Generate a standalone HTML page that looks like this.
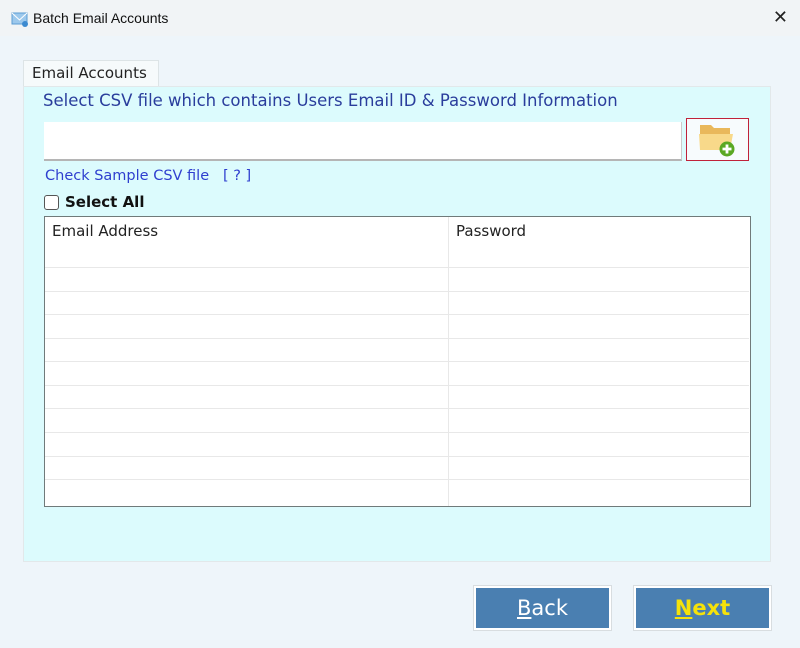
<!DOCTYPE html>
<html><head><style>
body{margin:0;width:800px;height:648px;overflow:hidden;background:#eef5fa;font-family:"DejaVu Sans","Liberation Sans",sans-serif;position:relative}
.tb{position:absolute;left:0;top:0;width:800px;height:36px;background:#f1f4f6;}
.tb span{position:absolute;left:33px;top:10px;font-family:"Liberation Sans",sans-serif;font-size:14px;color:#111}
.x{position:absolute;right:12px;top:7px;font-size:18px;color:#222;font-family:"Liberation Sans",sans-serif}
.tab{position:absolute;left:23px;top:60px;width:134px;height:27px;background:#f6fafb;border:1px solid #dde4e6;border-bottom:none;font-size:15px;color:#222}
.tab span{position:absolute;left:8px;top:3px}
.panel{position:absolute;left:23px;top:86px;width:746px;height:474px;background:#dcfbfd;border:1px solid #e2e8ea}
.t{position:absolute;font-size:15.5px;color:#2a3d9c}
.inp{position:absolute;left:44px;top:122px;width:637px;height:37px;background:#fff;border-bottom:2px solid #b5b5b5;border-right:1px solid #ccc}
.br{position:absolute;left:686px;top:118px;width:63px;height:43px;border:1px solid #c0223a;background:#f7fbfd;box-sizing:border-box}
.tbl{position:absolute;left:44px;top:216px;width:707px;height:291px;background:#fff;border:1px solid #707a7a;box-sizing:border-box}
.btn{position:absolute;top:586px;width:137px;height:44px;background:#4a7fb1;border:2px solid #fff;box-sizing:border-box;box-shadow:0 0 0 1px #d8dde0;color:#fff;font-size:21px;text-align:center;line-height:40px}
</style></head><body>
<div class="tb">
<svg style="position:absolute;left:11px;top:11px" width="18" height="16" viewBox="0 0 18 16"><rect x="1" y="2" width="15" height="11" fill="#9cc8ec" stroke="#5c9bd3"/><path d="M1 2 L8.5 9 L16 2" fill="none" stroke="#fff"/><circle cx="14" cy="13" r="3" fill="#3c8ad0"/></svg>
<span>Batch Email Accounts</span><div class="x">✕</div></div>
<div class="tab"><span>Email Accounts</span></div>
<div class="panel"></div>
<div class="t" style="left:43px;top:91px;font-size:16.5px">Select CSV file which contains Users Email ID &amp; Password Information</div>
<div class="inp"></div>
<div class="br"><svg style="position:absolute;left:11px;top:3px" width="40" height="36" viewBox="0 0 40 36"><path d="M2 3 h11 l3 3 h16 v21 h-30z" fill="#e9b85b"/><path d="M1 12 h34 l-3 16 h-30z" fill="#f8d98a"/><circle cx="29" cy="27" r="7.5" fill="#5aa823"/><path d="M29 22.5 v9 M24.5 27 h9" stroke="#fff" stroke-width="2.8"/></svg></div>
<div class="t" style="left:45px;top:168px;font-size:14.5px;color:#2f3fcf">Check Sample CSV file &nbsp;&nbsp;[ ? ]</div>
<div style="position:absolute;left:44px;top:195px;width:13px;height:13px;border:1px solid #555;border-radius:3px;background:#fff"></div>
<div style="position:absolute;left:65px;top:193px;font-size:15px;font-weight:bold;color:#111">Select All</div>
<div class="tbl">
<div style="position:absolute;left:7px;top:5px;font-size:15px;color:#222">Email Address</div>
<div style="position:absolute;left:411px;top:5px;font-size:15px;color:#222">Password</div>
<div style="position:absolute;left:403px;top:0;width:1px;height:289px;background:#e8e8e8"></div>
</div>
<svg style="position:absolute;left:44px;top:216px" width="706" height="290"><g stroke="#e8e8e8"><line x1="1" x2="705" y1="51.5" y2="51.5"/><line x1="1" x2="705" y1="75.5" y2="75.5"/><line x1="1" x2="705" y1="98.5" y2="98.5"/><line x1="1" x2="705" y1="122.5" y2="122.5"/><line x1="1" x2="705" y1="145.5" y2="145.5"/><line x1="1" x2="705" y1="169.5" y2="169.5"/><line x1="1" x2="705" y1="192.5" y2="192.5"/><line x1="1" x2="705" y1="216.5" y2="216.5"/><line x1="1" x2="705" y1="240.5" y2="240.5"/><line x1="1" x2="705" y1="263.5" y2="263.5"/></g></svg>
<div class="btn" style="left:474px"><u>B</u>ack</div>
<div class="btn" style="left:634px;color:#f5e20a;font-weight:bold"><u>N</u>ext</div>
</body></html>
